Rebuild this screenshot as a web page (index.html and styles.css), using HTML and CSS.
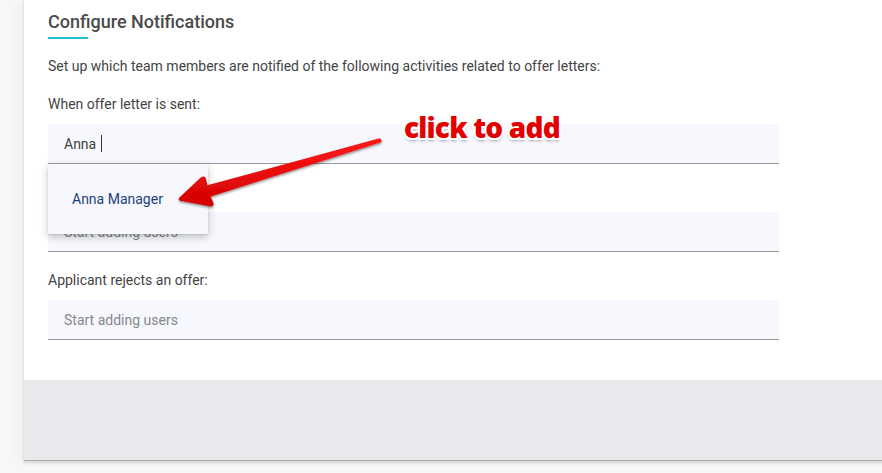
FILE: index.html
```html
<!DOCTYPE html>
<html>
<head>
<meta charset="utf-8">
<link rel="stylesheet" href="styles.css">
</head>
<body>
<div class="page">
  <div class="card">
    <div class="card-body">
      <h2 class="title">Configure Notifications</h2>
      <div class="title-bar"></div>
      <p class="desc">Set up which team members are notified of the following activities related to offer letters:</p>

      <div class="section">
        <div class="label">When offer letter is sent:</div>
        <div class="field-wrap">
          <div class="field"><span class="typed">Anna</span><span class="caret"></span></div>
          <div class="dropdown"><div class="option">Anna Manager</div></div>
        </div>
      </div>

      <div class="section">
        <div class="label">Offer is accepted:</div>
        <div class="field"><span class="placeholder">Start adding users</span></div>
      </div>

      <div class="section last">
        <div class="label">Applicant rejects an offer:</div>
        <div class="field"><span class="placeholder">Start adding users</span></div>
      </div>
    </div>
    <div class="card-footer"></div>
  </div>

  <div class="annotation">
    <svg class="arrow" width="882" height="473" viewBox="0 0 882 473">
      <defs>
        <linearGradient id="ag" x1="0" y1="0" x2="0" y2="1">
          <stop offset="0" stop-color="#ff1a1a"/>
          <stop offset="1" stop-color="#d20000"/>
        </linearGradient>
        <filter id="sh" x="-20%" y="-20%" width="140%" height="160%">
          <feDropShadow dx="0" dy="1.5" stdDeviation="1.2" flood-color="#000" flood-opacity="0.45"/>
        </filter>
      </defs>
      <path d="M379.5,138.2 Q382.5,139.5 381.2,142.2 L210.5,196.5 L213.5,203.2 Q214,207 209.5,206.2 L180.5,200.8 Q177.5,200 179.5,197.5 L200.5,177.8 Q204.5,175 205.8,178.5 L207.5,185.3 Z" fill="url(#ag)" filter="url(#sh)"/>
    </svg>
    <div class="note">click to add</div>
  </div>
</div>
</body>
</html>
```

FILE: styles.css
```css
html, body {
  margin: 0;
  padding: 0;
}
body {
  background: #f7f7f7;
  font-family: Roboto, "Noto Sans", Arial, sans-serif;
  overflow: hidden;
  width: 882px;
  height: 473px;
}
.page {
  position: relative;
  width: 882px;
  height: 473px;
  overflow: hidden;
}
.card {
  margin-left: 24px;
  width: 900px;
  background: #fff;
  box-shadow: -1px 0 0 #e4e4e4, -6px 0 10px rgba(0,0,0,0.03), 0 2px 3px rgba(0,0,0,0.12);
}
.card-body {
  padding: 10px 24px 40px 24px;
}
.title {
  margin: 0;
  font-size: 18px;
  line-height: 24px;
  font-weight: 500;
  color: #4a4a4a;
}
.title-bar {
  width: 40px;
  height: 2px;
  margin-top: 3px;
  background: #1fbcd2;
}
.desc {
  margin: 17px 0 0 0;
  font-size: 14px;
  line-height: 20px;
  color: #444;
}
.section {
  margin-top: 18px;
}
.label {
  font-size: 14px;
  line-height: 20px;
  color: #444;
}
.field-wrap {
  position: relative;
}
.field {
  margin-top: 10px;
  width: 731px;
  background: #f7f8fd;
  border-bottom: 1px solid #9a9a9a;
  display: flex;
  align-items: center;
  padding-left: 16px;
  box-sizing: border-box;
  height: 40px;
  font-size: 14px;
  color: #444;
}
.typed {
  color: #3e3e3e;
}
.caret {
  display: inline-block;
  width: 1px;
  height: 17px;
  background: #333;
  margin-left: 5px;
}
.placeholder {
  color: #85878c;
}
.dropdown {
  position: absolute;
  top: 40px;
  left: 0;
  width: 160px;
  height: 70px;
  background: #f7f8fd;
  border-radius: 2px;
  box-shadow: 0 3px 8px rgba(0,0,0,0.22), 0 1px 2px rgba(0,0,0,0.1);
  display: flex;
  align-items: center;
  z-index: 2;
}
.option {
  padding-left: 24px;
  font-size: 14px;
  color: #1d3f7e;
}
.card-footer {
  height: 80px;
  background: #e8e9ec;
  border-bottom: 1px solid #ababab;
}
.annotation {
  position: absolute;
  left: 0;
  top: 0;
  width: 882px;
  height: 473px;
  pointer-events: none;
  z-index: 5;
}
.arrow {
  position: absolute;
  left: 0;
  top: 0;
}
.note {
  position: absolute;
  left: 404px;
  top: 108px;
  font-family: "Open Sans", "DejaVu Sans", sans-serif;
  font-weight: 800;
  font-size: 28px;
  line-height: 38px;
  color: #e30000;
  letter-spacing: -0.8px;
  text-shadow:
    -2px 0 0 #fff, 2px 0 0 #fff, 0 -2px 0 #fff, 0 2px 0 #fff,
    -1.5px -1.5px 0 #fff, 1.5px -1.5px 0 #fff, -1.5px 1.5px 0 #fff, 1.5px 1.5px 0 #fff,
    0 3px 3px rgba(0,0,0,0.35);
}
```
